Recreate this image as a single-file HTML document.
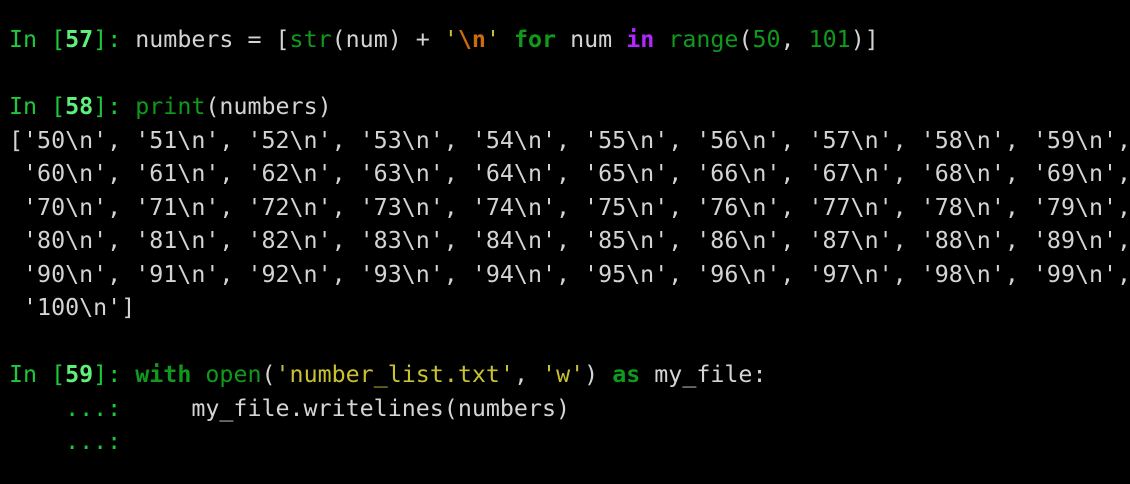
<!DOCTYPE html>
<html><head><meta charset="utf-8"><style>
html,body{margin:0;padding:0;background:#000;width:1130px;height:484px;overflow:hidden}
pre{position:absolute;left:9px;top:23px;margin:0;font-family:"DejaVu Sans Mono","Liberation Mono",monospace;font-size:23.3px;line-height:33.5px;color:#d4d4d4;white-space:pre}
.p{color:#1ec83c}.n{color:#5ef07a;font-weight:bold}.b{color:#0f9a1c}.k{color:#0f9a1c;font-weight:bold}
.s{color:#c9c132}.e{color:#d06a10;font-weight:bold}.i{color:#b028ff;font-weight:bold}
</style></head><body>
<pre><span class="p">In [</span><span class="n">57</span><span class="p">]: </span>numbers = [<span class="b">str</span>(num) + <span class="s">'</span><span class="e">\n</span><span class="s">'</span> <span class="k">for</span> num <span class="i">in</span> <span class="b">range</span>(<span class="b">50</span>, <span class="b">101</span>)]

<span class="p">In [</span><span class="n">58</span><span class="p">]: </span><span class="b">print</span>(numbers)
['50\n', '51\n', '52\n', '53\n', '54\n', '55\n', '56\n', '57\n', '58\n', '59\n',
 '60\n', '61\n', '62\n', '63\n', '64\n', '65\n', '66\n', '67\n', '68\n', '69\n',
 '70\n', '71\n', '72\n', '73\n', '74\n', '75\n', '76\n', '77\n', '78\n', '79\n',
 '80\n', '81\n', '82\n', '83\n', '84\n', '85\n', '86\n', '87\n', '88\n', '89\n',
 '90\n', '91\n', '92\n', '93\n', '94\n', '95\n', '96\n', '97\n', '98\n', '99\n',
 '100\n']

<span class="p">In [</span><span class="n">59</span><span class="p">]: </span><span class="k">with</span> <span class="b">open</span>(<span class="s">'number_list.txt'</span>, <span class="s">'w'</span>) <span class="k">as</span> my_file:
<span class="p">    ...: </span>    my_file.writelines(numbers)
<span class="p">    ...: </span></pre>
</body></html>
